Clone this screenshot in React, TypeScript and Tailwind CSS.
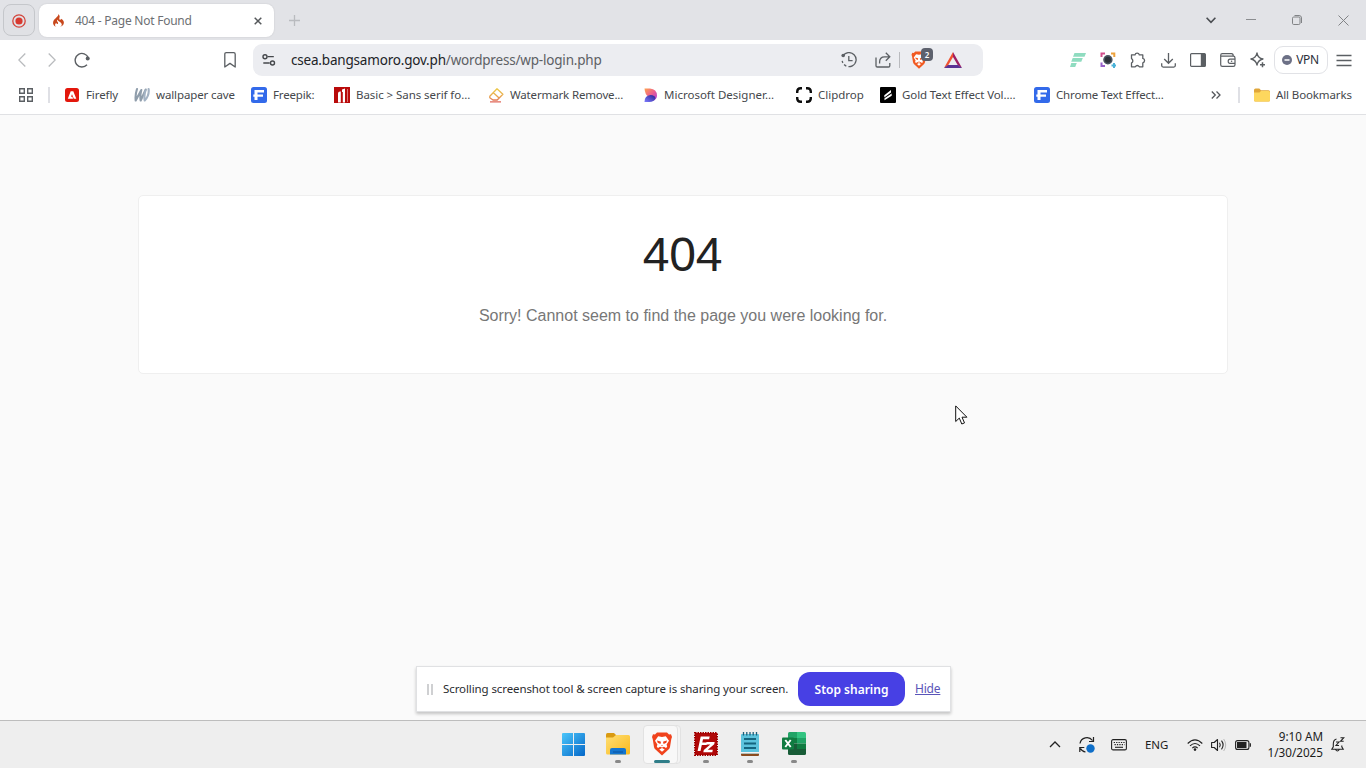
import type { ReactNode } from "react";
import { SiCodeigniter } from "react-icons/si";

const Svg = ({ w = 18, h = 18, children, className = "" }: { w?: number; h?: number; children: ReactNode; className?: string }) => (
  <svg width={w} height={h} viewBox={`0 0 ${w} ${h}`} fill="none" className={`shrink-0 ${className}`}>
    {children}
  </svg>
);

const INK = "#5b5f63";

const Cell = ({ children }: { children: ReactNode }) => (
  <div className="flex w-[30px] shrink-0 items-center justify-center">{children}</div>
);

const BraveLion = ({ width, height, color }: { width: number; height: number; color: string }) => (
  <svg width={width} height={height} viewBox="0 0 20 24" fill="none" className="shrink-0">
    <path d="M5 .5h10l2 2 2-.3 1 2.800-.7 2L18 15q-.3 1.500-1.500 2.500L10 23.500l-6.500-6Q2.300 16.500 2 15L.7 7 0 5l1-2.800 2 .3z" fill={color} />
    <path d="M6.200 4.200l3.800.8 3.800-.8 3.200 4.600-2.400 3.700.6 2.300-1.200 1.200-2-1.200-2 .8-2-.8-2 1.200-1.200-1.200.6-2.300L3 8.800z" fill="#fff" />
    <path d="M7.300 17.400L10 15.900l2.700 1.500L10 19.800z" fill="#fff" />
    <path d="M5 8.600l3.700.9.200 1.200-.6 1.300-2.600-1.200zM15 8.600l-3.700.9-.2 1.200.6 1.300 2.600-1.200z" fill={color} />
    <path d="M9 13.200h2l-1 1z" fill={color} />
  </svg>
);

function TabStrip() {
  return (
    <div className="flex h-10 shrink-0 items-center bg-[#e2e3e7] pl-[3px]">
      <div className="flex h-8 w-8 shrink-0 items-center justify-center rounded-lg border border-[#c5c7cb] bg-[#e0e1e5]">
        <Svg w={14} h={14} className="relative top-[0.5px]">
          <circle cx="7" cy="7" r="6.2" stroke="#d2453c" strokeWidth="1.3" />
          <circle cx="7" cy="7" r="3.6" fill="#d83a30" />
        </Svg>
      </div>
      <div className="ml-1 flex h-[33px] w-[235px] shrink-0 items-center rounded-lg bg-white pt-px shadow-[0_0_2px_rgba(0,0,0,0.12)]">
        <SiCodeigniter size={13} color="#c8481c" className="ml-[13px] shrink-0" />
        <span className="ml-[10px] flex-1 text-[12px] tracking-[-0.24px] text-[#6d7073]">404 - Page Not Found</span>
        <Svg w={8} h={8} className="mr-3">
          <path d="M.7.7l6.6 6.6M7.3.7L.7 7.3" stroke="#55585b" strokeWidth="1.5" />
        </Svg>
      </div>
      <Svg w={11} h={11} className="ml-[15px]">
        <path d="M5.5 0v11M0 5.5h11" stroke="#b9bbbf" strokeWidth="1.3" />
      </Svg>
      <div className="ml-auto flex items-center">
        <div className="flex w-[34px] justify-center">
          <Svg w={10} h={7}>
            <path d="M.6.8L5 5.4 9.4.8" stroke="#4a4d51" strokeWidth="1.6" />
          </Svg>
        </div>
        <div className="flex w-[46px] justify-center">
          <Svg w={10} h={10}>
            <path d="M0 4.5h10" stroke="#8b8d90" />
          </Svg>
        </div>
        <div className="flex w-[46px] justify-center">
          <Svg w={10} h={10}>
            <rect x=".5" y="2" width="7.500" height="7.500" rx="1.200" stroke="#818386" />
            <path d="M2.500.5H7A2.500 2.500 0 0 1 9.500 3v5" stroke="#818386" />
          </Svg>
        </div>
        <div className="flex w-[46px] justify-center">
          <Svg w={11} h={11}>
            <path d="M.5.5l10 10M10.5.5l-10 10" stroke="#818386" />
          </Svg>
        </div>
      </div>
    </div>
  );
}

function Toolbar() {
  return (
    <div className="flex h-9 shrink-0 items-center bg-white pt-1 pl-[7px]">
      <Cell>
        <Svg w={8} h={14}><path d="M7.3.5L.8 7l6.5 6.5" stroke="#b9bbbe" strokeWidth="1.3" /></Svg>
      </Cell>
      <Cell>
        <Svg w={8} h={14}><path d="M.7.5L7.2 7 .7 13.5" stroke="#b9bbbe" strokeWidth="1.3" /></Svg>
      </Cell>
      <Cell>
        <Svg w={16} h={16}>
          <path d="M13 12.8A6.8 6.8 0 1 1 14.3 5.8" stroke={INK} strokeWidth="1.4" />
          <circle cx="13.7" cy="6.5" r="2" fill={INK} />
        </Svg>
      </Cell>
      <div className="ml-[118px] flex">
        <Cell>
          <Svg w={12} h={16}><path d="M2.300.7h7.400q1.500 0 1.500 1.500V15L6 11.400.8 15V2.200Q.8.7 2.300.7z" stroke={INK} strokeWidth="1.3" strokeLinejoin="round" /></Svg>
        </Cell>
      </div>
      <div className="ml-2 flex h-8 w-[730px] shrink-0 items-center rounded-[9px] bg-[#ecedf1] pr-[21px] pl-2">
        <Svg w={16} h={14}>
          <circle cx="4" cy="3.7" r="2" stroke="#44474b" strokeWidth="1.4" />
          <circle cx="11.5" cy="10" r="2" stroke="#44474b" strokeWidth="1.4" />
          <path d="M6.5 3.7h6.3M2.3 10h6.4" stroke="#44474b" strokeWidth="1.3" />
        </Svg>
        <span className="ml-[14px] flex-1 pt-px text-[13.5px] tracking-[-0.19px] text-[#5d6064]">
          <span className="text-[#212327]">csea.bangsamoro.gov.ph</span>/wordpress/wp-login.php
        </span>
        <Svg w={16} h={16}>
          <path d="M1.9 4.4A7 7 0 1 1 1.2 8.8" stroke={INK} strokeWidth="1.3" strokeDasharray="30 2.2 2.6 2 4 2" />
          <circle cx="2.2" cy="3.5" r="1.8" fill={INK} />
          <path d="M7.8 4v4.700h3.800" stroke={INK} strokeWidth="1.3" />
        </Svg>
        <Svg w={16} h={16} className="ml-[18px]">
          <path d="M1 5.500v8.200q0 1.300 1.300 1.300h11.200q1.300 0 1.300-1.300V11" stroke={INK} strokeWidth="1.3" />
          <path d="M4.600 11.500V10q0-5.200 5-5.200h4.800M10.800.8l4 4-4 4" stroke={INK} strokeWidth="1.3" />
        </Svg>
        <div className="ml-2 h-4 w-px bg-[#b9babe]" />
        <div className="relative ml-[10px] flex h-[18px] w-[18px] items-center justify-center">
          <BraveLion width={16} height={18} color="#f15a22" />
          <span className="absolute -top-[3px] left-[11px] flex h-[13px] w-3 items-center justify-center rounded-[4px] bg-[#5d616d] text-[8px] font-semibold text-white">2</span>
        </div>
        <Svg w={18} h={16} className="ml-4">
          <path d="M9 0L0 16l4-2.500L9 5z" fill="#f0512f" />
          <path d="M9 0l9 16-4-2.500L9 5z" fill="#9e1f63" />
          <path d="M0 16h18l-4-3H4z" fill="#5a3394" />
        </Svg>
      </div>
      <div className="ml-[80px] flex shrink-0">
        <Cell>
          <Svg w={16} h={14}>
            <path d="M4.500 0H16l-1.500 3.700H3zM2.700 5h10.100L11.300 8.700H1.200zM1.300 10h5.500L5.200 14H0z" fill="#8fdcc0" />
          </Svg>
        </Cell>
        <Cell>
          <Svg w={16} h={16}>
            <path d="M1.500 5V1.500H5" stroke="#d14e8c" strokeWidth="2" />
            <path d="M11 1.500h3.300V5" stroke="#eda23c" strokeWidth="2" />
            <path d="M1.500 10.500V14H5" stroke="#9761c9" strokeWidth="2" />
            <path d="M14 11v5M11.500 13.500h5" stroke="#4cb3d8" strokeWidth="2" />
            <circle cx="7.900" cy="7.700" r="4.700" fill="#4a5560" />
            <circle cx="7.900" cy="7.700" r="3" fill="#2b3138" />
          </Svg>
        </Cell>
        <Cell>
          <Svg w={16} h={16}>
            <path d="M1.500 2.800H5a2.200 2.200 0 0 1 4.300 0h3.500v3.600a2.250 2.250 0 0 1 0 4.400v4H9.500q-2.200-2.600-4.400 0H1.500v-3.700q2.700-2.200 0-4.500z" stroke={INK} strokeWidth="1.300" strokeLinejoin="round" />
          </Svg>
        </Cell>
        <Cell>
          <Svg w={15} h={15}>
            <path d="M7.500 0v10M3.200 6l4.300 4.300L11.800 6M.7 10.300v2.300q0 1.500 1.500 1.500h10.600q1.500 0 1.500-1.500v-2.300" stroke={INK} strokeWidth="1.300" />
          </Svg>
        </Cell>
        <Cell>
          <Svg w={16} h={14}>
            <rect x=".6" y=".6" width="14.800" height="12.800" rx="1" stroke={INK} strokeWidth="1.200" />
            <path d="M10.800.6H15v12.800h-4.200z" fill={INK} />
          </Svg>
        </Cell>
        <Cell>
          <Svg w={16} h={14}>
            <path d="M.7 3.200h12.600q1.700 0 1.700 1.700v6.800q0 1.600-1.700 1.600H2.300q-1.600 0-1.600-1.600V2.300Q.7.7 2.300.7h9.200q1.800 0 1.800 2.500" stroke={INK} strokeWidth="1.200" />
            <path d="M15 6.200h-5q-1.800 0-1.800 2.100T10 10.400h5" stroke={INK} strokeWidth="1.200" />
            <circle cx="11.600" cy="8.300" r=".8" fill={INK} />
          </Svg>
        </Cell>
        <Cell>
          <Svg w={16} h={16}>
            <path d="M7 .8q.7 5.200 6 6.200Q7.900 8.100 7 13.200 6.100 8.100.9 7 6.100 5.900 7 .8z" stroke={INK} strokeWidth="1.300" strokeLinejoin="round" />
            <path d="M12.500 10.200v5M10 12.700h5" stroke={INK} strokeWidth="1.500" />
          </Svg>
        </Cell>
      </div>
      <div className="ml-px flex h-7 w-[54px] shrink-0 items-center justify-center gap-1 rounded-[9px] border border-[#e1e2e6]">
        <Svg w={10} h={10} className="-ml-px">
          <circle cx="5" cy="5" r="5" fill="#6c7086" />
          <path d="M2.500 5h5" stroke="#fff" strokeWidth="1.500" />
        </Svg>
        <span className="text-[12px] tracking-[-0.3px] text-[#2d2f3a]">VPN</span>
      </div>
      <div className="ml-px flex shrink-0">
        <Cell>
          <Svg w={16} h={13}><path d="M.5 1.500h15M.5 6.500h15M.5 11.500h15" stroke={INK} strokeWidth="1.300" /></Svg>
        </Cell>
      </div>
    </div>
  );
}

const FreepikIcon = () => (
  <Svg w={16} h={16}>
    <rect width="16" height="16" rx="2.500" fill="#336aea" />
    <path d="M3.500 3H13v2.500H6.500v2H12v2.300H6.500V13h-3V9.800H2.300V7.500h1.200z" fill="#fff" />
  </Svg>
);

const bookmarks: { label: string; slot: string; tracking: string; icon: ReactNode }[] = [
  {
    label: "Firefly", slot: "w-[70px]", tracking: "tracking-[-0.1px]",
    icon: (
      <Svg w={16} h={16}>
        <rect x="1" y="1" width="14" height="14" rx="2.500" fill="#e3170c" />
        <path d="M3.800 11.800L6.700 4.300h2.600l3 7.500H9.800L8 7.300l-1 2.400h1.400l.7 2.100z" fill="#fff" />
      </Svg>
    ),
  },
  {
    label: "wallpaper cave", slot: "w-[117px]", tracking: "tracking-[-0.12px]",
    icon: (
      <Svg w={16} h={16}>
        <path d="M3 2Q1 8 1.700 13.500L7.300 3Q5.800 9 6.700 13.500L11.700 2.500" stroke="#8f9dab" strokeWidth="2.100" strokeLinejoin="round" strokeLinecap="round" />
        <path d="M11.500 3.500q-1.700 5.500-.8 10Q15.500 8.500 14.600 2" stroke="#a3b2c3" strokeWidth="2.100" strokeLinejoin="round" strokeLinecap="round" />
      </Svg>
    ),
  },
  { label: "Freepik:", slot: "w-[83px]", tracking: "tracking-[-0.18px]", icon: <FreepikIcon /> },
  {
    label: "Basic > Sans serif fo...", slot: "w-[154px]", tracking: "tracking-[-0.06px]",
    icon: (
      <Svg w={16} h={16}>
        <rect width="16" height="16" fill="#b90a0a" />
        <path d="M4 15.500V6.500q0-2 2-2h.8v11zM8 2.500l3-1v14H8.800V5H8z" fill="#fff" />
        <path d="M13.500 2v13" stroke="#e58f8f" strokeWidth=".8" />
      </Svg>
    ),
  },
  {
    label: "Watermark Remove...", slot: "w-[154px]", tracking: "tracking-[-0.15px]",
    icon: (
      <Svg w={16} h={16}>
        <defs>
          <linearGradient id="eraser" x1="0" y1="0" x2="0" y2="1">
            <stop offset="0" stopColor="#ecc94b" />
            <stop offset=".55" stopColor="#e9a94e" />
            <stop offset="1" stopColor="#e0665a" />
          </linearGradient>
        </defs>
        <path d="M1.800 9.200L9 1.800l5.900 5.400-5.700 5.800H5L1.800 10.700zM5.400 5.700l5.700 5.300M2 14.800h11" stroke="url(#eraser)" strokeWidth="1.300" strokeLinejoin="round" />
      </Svg>
    ),
  },
  {
    label: "Microsoft Designer...", slot: "w-[154px]", tracking: "tracking-[0px]",
    icon: (
      <Svg w={16} h={16}>
        <defs>
          <linearGradient id="dTop" x1="0" y1="0" x2="1" y2="1">
            <stop offset="0" stopColor="#ffa34d" />
            <stop offset=".5" stopColor="#ee5f8e" />
            <stop offset="1" stopColor="#a43de0" />
          </linearGradient>
          <linearGradient id="dBottom" x1="1" y1="0" x2="0" y2="1">
            <stop offset="0" stopColor="#2a1f8f" />
            <stop offset="1" stopColor="#7d7cff" />
          </linearGradient>
        </defs>
        <path d="M2.500 1.500H8q6.800.5 7 7 0 4-4 5.200L8.500 9.500h-2Q3 8 2.500 1.500z" fill="url(#dTop)" />
        <path d="M2.500 15q0-6.500 6-7 4.500.2 5 3.200-1.500 3.800-6 3.800z" fill="url(#dBottom)" />
      </Svg>
    ),
  },
  {
    label: "Clipdrop", slot: "w-[84px]", tracking: "tracking-[0px]",
    icon: (
      <Svg w={16} h={16}>
        <path d="M1.200 6V4.700q0-3.500 3.500-3.500H6M10 1.200h1.300q3.500 0 3.500 3.500V6M14.800 10v1.300q0 3.500-3.500 3.500H10M6 14.800H4.700q-3.500 0-3.500-3.500V10" stroke="#0c0c0c" strokeWidth="2.400" />
      </Svg>
    ),
  },
  {
    label: "Gold Text Effect Vol....", slot: "w-[154px]", tracking: "tracking-[-0.1px]",
    icon: (
      <Svg w={16} h={16}>
        <rect width="16" height="16" rx="1" fill="#000" />
        <path d="M4.300 8.300l6.700-5.300v2.500L4.300 10.500zM4.500 13.200v-2L11.700 6.500v2.300z" fill="#fff" />
      </Svg>
    ),
  },
  { label: "Chrome Text Effect...", slot: "w-[154px]", tracking: "tracking-[-0.15px]", icon: <FreepikIcon /> },
];

function BookmarksBar() {
  return (
    <div className="flex h-[39px] shrink-0 items-center border-b border-[#e0e1e4] bg-white pl-[19px] text-[11.5px] text-[#45484c]">
      <Svg w={14} h={14}>
        <path d="M.7.7h4.600v4.600H.7zM8.700.7h4.600v4.600H8.700zM.7 8.700h4.600v4.600H.7zM8.700 8.700h4.600v4.600H8.700z" stroke={INK} strokeWidth="1.400" />
      </Svg>
      <div className="mr-[14px] ml-[15px] h-4 w-[2px] bg-[#dfe0e5]" />
      {bookmarks.map((b) => (
        <div key={b.label} className={`flex shrink-0 items-center gap-1.5 whitespace-nowrap ${b.slot}`}>
          {b.icon}
          <span className={b.tracking}>{b.label}</span>
        </div>
      ))}
      <Svg w={10} h={8} className="ml-[23px]">
        <path d="M.8.5L4.300 4 .8 7.500M5.500.5L9 4 5.500 7.500" stroke="#55585c" strokeWidth="1.300" />
      </Svg>
      <div className="ml-[17px] h-4 w-[2px] bg-[#dfe0e5]" />
      <Svg w={16} h={14} className="ml-[14px]">
        <path d="M0 2Q0 .5 1.500.5h3.800L7 2.200h7.500q1.500 0 1.500 1.500V12q0 1.500-1.500 1.500h-13Q0 13.500 0 12z" fill="#e0a63a" />
        <path d="M0 4.500h5.500L7 3h7.500Q16 3 16 4.500V12q0 1.500-1.500 1.500h-13Q0 13.500 0 12z" fill="#fdd75e" />
      </Svg>
      <span className="ml-1.5 tracking-[-0.12px] whitespace-nowrap">All Bookmarks</span>
    </div>
  );
}

function SharingBar() {
  return (
    <div className="absolute top-[551px] left-[416px] flex h-[46px] w-[535px] items-center border border-[#e0e1e3] bg-white font-['Noto_Sans',sans-serif] shadow-[0_2px_3px_rgba(0,0,0,0.22)]">
      <div className="ml-[10px] flex gap-[2px]">
        <div className="h-[11px] w-[2px] bg-[#cfd0d2]" />
        <div className="h-[11px] w-[2px] bg-[#cfd0d2]" />
      </div>
      <span className="ml-[10px] w-[355px] text-[11.5px] tracking-[-0.1px] whitespace-nowrap text-[#2a2c30]">
        Scrolling screenshot tool &amp; screen capture is sharing your screen.
      </span>
      <button className="h-[34px] w-[107px] shrink-0 rounded-xl bg-[#4740e4] pt-px text-[12px] font-semibold whitespace-nowrap text-white">Stop sharing</button>
      <a className="ml-[10px] text-[12px] tracking-[-0.2px] text-[#5a55b8] underline">Hide</a>
    </div>
  );
}

function PageContent() {
  return (
    <main className="relative flex-1 bg-[#fafafa] px-[138px] pt-20 font-['Liberation_Sans',Arial,sans-serif]">
      <div className="flex h-[179px] flex-col items-center rounded-[5px] border border-[#efefef] bg-white pt-[33px]">
        <h1 className="mr-px text-[48px] leading-[52px] tracking-[-0.2px] text-[#222]">404</h1>
        <p className="mt-[25px] text-[16px] leading-5 text-[#777]">Sorry! Cannot seem to find the page you were looking for.</p>
      </div>
      <svg width="14" height="20" viewBox="0 0 14 20" className="absolute top-[290px] left-[955px]">
        <path d="M.7.900v15.600l3.600-3.400 2.500 5.900 2.700-1.100-2.500-5.700h4.900z" fill="#fff" stroke="#111" strokeWidth="1" />
      </svg>
      <SharingBar />
    </main>
  );
}

const Task = ({ children, active = false, running = true }: { children: ReactNode; active?: boolean; running?: boolean }) => (
  <div className="relative flex h-10 w-11 shrink-0 items-center justify-center">
    {active && <div className="absolute top-0 left-[6px] h-[39px] w-[35px] rounded border border-[#e2e2e2] bg-[#f4f4f4]" />}
    {active && <div className="absolute top-0 left-[3px] h-[39px] w-[35px] rounded border border-[#e2e2e2] bg-[#f8f8f8]" />}
    <div className="relative -top-px flex">{children}</div>
    {running && (
      <div className={active ? "absolute bottom-[2px] left-[14px] h-[3px] w-4 rounded-full bg-[#2f7d88]" : "absolute bottom-[2px] left-[19px] h-[3px] w-1.5 rounded-full bg-[#888]"} />
    )}
  </div>
);

function Taskbar() {
  return (
    <div className="flex h-12 shrink-0 items-center border-t border-[#bdbdbd] bg-[#eeeeee] pl-[552px] text-[#1c1c1c]">
      <Task running={false}>
        <Svg w={24} h={24} className="mr-0.5">
          <defs>
            <linearGradient id="win" x1="0" y1="0" x2="1" y2="1">
              <stop offset="0" stopColor="#4cc6fa" />
              <stop offset="1" stopColor="#0467c8" />
            </linearGradient>
          </defs>
          <path d="M1 2q0-1 1-1h10v11H1zM13 1h10q1 0 1 1v10H13zM1 13h11v11H2q-1 0-1-1zM13 13h11v10q0 1-1 1H13z" fill="url(#win)" />
        </Svg>
      </Task>
      <Task>
        <Svg w={24} h={22}>
          <defs>
            <linearGradient id="folder" x1="0" y1="0" x2="1" y2="1">
              <stop offset="0" stopColor="#ffdf74" />
              <stop offset="1" stopColor="#f9b91e" />
            </linearGradient>
          </defs>
          <path d="M0 1.500Q0 0 1.500 0H8l2.500 2.500V6H0z" fill="#d99a12" />
          <path d="M0 4.500h7L10 2h12.500Q24 2 24 3.500V20q0 1.500-1.500 1.500h-21Q0 21.500 0 20z" fill="url(#folder)" />
          <path d="M4 21.500V17q0-2 2-2h12q2 0 2 2v4.500z" fill="#1476d0" />
          <path d="M7 18.500h10v1H7z" fill="#0a529e" />
        </Svg>
      </Task>
      <Task active>
        <BraveLion width={20} height={24} color="#f0431d" />
      </Task>
      <Task>
        <Svg w={24} h={24}>
          <rect x="1" y="1" width="22" height="22" fill="#b10a0a" stroke="#a00000" strokeWidth="2" strokeDasharray="1.500 1" />
          <rect x="2" y="2" width="20" height="20" fill="#b00808" />
          <path d="M6.700 4.500h9l-.6 2.700H9l-.7 3.300h4.900l-.6 2.600H7.800l-1.300 6H3.600z" fill="#fff" />
          <path d="M12.500 10h8.200l-.5 2.300-6.400 5.500h5l-.5 2.400h-9l.5-2.300 6.500-5.500H12z" fill="#fff" />
        </Svg>
      </Task>
      <Task>
        <Svg w={20} h={24}>
          <rect x="1" y="2" width="18" height="20" rx="1" fill="#5cc3dd" />
          <path d="M1 21.500h18V23q0 1-1 1H2q-1 0-1-1z" fill="#8a4b1e" />
          <path d="M1 20h18v1.500H1z" fill="#f2f2f2" />
          <path d="M3.500 0v3.500M6.800 0v3.500M10 0v3.500M13.200 0v3.500M16.500 0v3.500" stroke="#1d5f7a" strokeWidth="1.300" />
          <path d="M4 7h12M4 11.500h12M4 16h12" stroke="#14657f" strokeWidth="1.800" />
        </Svg>
      </Task>
      <Task>
        <Svg w={24} h={23}>
          <path d="M6 1.500Q6 0 7.500 0H15v6H6z" fill="#21a366" />
          <path d="M15 0h7.500Q24 0 24 1.500V6h-9z" fill="#33c481" />
          <path d="M6 6h9v5.500H6z" fill="#107c41" />
          <path d="M15 6h9v5.500h-9z" fill="#21a366" />
          <path d="M6 11.500h9V23H7.500Q6 23 6 21.500z" fill="#185c37" />
          <path d="M15 11.500h9V17h-9z" fill="#107c41" />
          <path d="M15 17h9v4.500q0 1.500-1.500 1.500H15z" fill="#185c37" />
          <rect y="5.500" width="12" height="12" rx="1" fill="#107c41" />
          <path d="M3.300 8l5.400 7M8.700 8l-5.400 7" stroke="#fff" strokeWidth="1.900" />
        </Svg>
      </Task>
      <div className="ml-[233px] flex shrink-0 items-center">
        <Svg w={12} h={7}><path d="M1 6l5-5 5 5" stroke="#222" strokeWidth="1.300" /></Svg>
        <Svg w={18} h={18} className="ml-[17px]">
          <path d="M2 7.500A7 7 0 0 1 14.500 4.500M15.500 1v4.500H11M1.800 16v-4.500h4.500M2.500 12.500Q4 15.500 7.500 16" stroke="#222" strokeWidth="1.200" />
          <circle cx="12.500" cy="12.500" r="4.200" fill="#0f6fc9" />
        </Svg>
        <Svg w={16} h={12} className="ml-[15px]">
          <rect x=".6" y=".6" width="14.800" height="10.300" rx="1.500" stroke="#222" strokeWidth="1.100" />
          <path d="M2.700 3.500h11M3.500 5.700h10" stroke="#222" strokeWidth="1.200" strokeDasharray="1.300 1.100" />
          <path d="M4 8.300h8" stroke="#222" strokeWidth="1.100" />
        </Svg>
        <span className="ml-[18px] w-[24px] pt-px text-[11.5px] tracking-[-0.1px] whitespace-nowrap">ENG</span>
        <Svg w={16} h={12} className="ml-[18px]">
          <path d="M.7 4.500Q8-2.800 15.300 4.500M3 6.900q5-4.800 10 0M5.300 9.100q2.700-2.500 5.400 0" stroke="#222" strokeWidth="1.100" />
          <circle cx="8" cy="10.600" r="1.300" fill="#222" />
        </Svg>
        <Svg w={16} h={14} className="ml-2">
          <path d="M.6 4.500h2.600L6.500 1.500v11L3.200 9.500H.6z" stroke="#222" strokeWidth="1.100" strokeLinejoin="round" />
          <path d="M8.500 4.700q1.600 2.300 0 4.600M10.500 2.700q3.200 4.300 0 8.600" stroke="#222" strokeWidth="1.100" />
          <path d="M12.700 1q4 6 0 12" stroke="#b8b8b8" />
        </Svg>
        <Svg w={17} h={10} className="ml-2">
          <rect x=".6" y=".6" width="13.300" height="8.800" rx="2" stroke="#222" strokeWidth="1.100" />
          <rect x="2" y="2" width="9.500" height="6" fill="#222" />
          <path d="M15.300 3.200v3.600" stroke="#222" strokeWidth="1.300" />
        </Svg>
        <div className="mb-0.5 ml-[13px] w-[58px] text-right text-[11.7px] leading-4 whitespace-nowrap">
          <div>9:10 AM</div>
          <div>1/30/2025</div>
        </div>
        <Svg w={14} h={15} className="ml-2">
          <path d="M5.500 2Q2.300 2.800 2.300 7v2.800L.8 12.200h11.400l-1.400-2.400V8.500M4.500 12.500q1.900 3 3.800 0" stroke="#222" strokeWidth="1.100" />
          <path d="M5 5h3L5 8.500h3M9.500.8h3.200L9.500 4.300h3.200" stroke="#222" strokeWidth="1.100" />
        </Svg>
      </div>
    </div>
  );
}

export default function App() {
  return (
    <div className="flex h-screen w-full flex-col overflow-hidden bg-[#fafafa] font-['Noto_Sans',sans-serif]">
      <TabStrip />
      <Toolbar />
      <BookmarksBar />
      <PageContent />
      <Taskbar />
    </div>
  );
}
